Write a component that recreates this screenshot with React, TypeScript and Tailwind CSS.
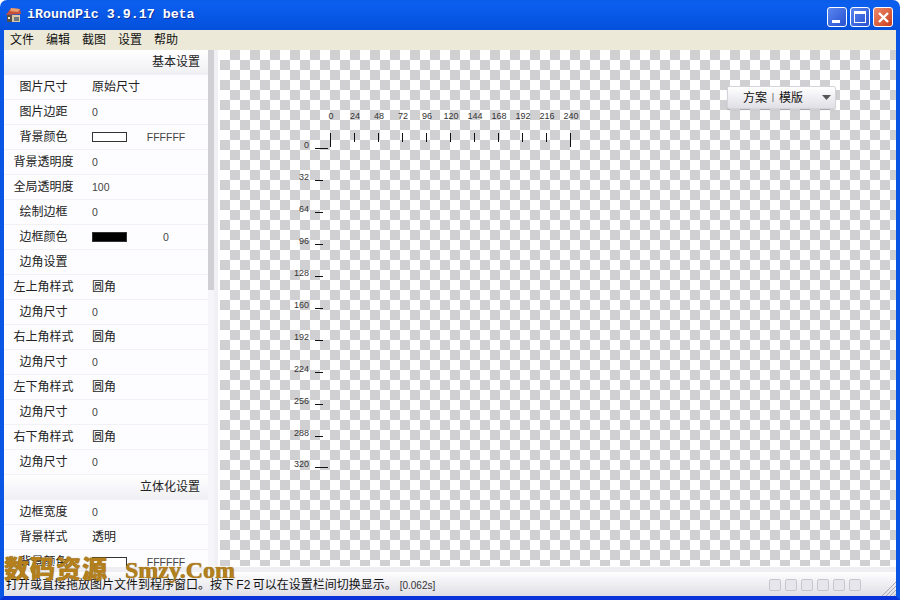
const xTicks = [0, 24, 48, 72, 96, 120, 144, 168, 192, 216, 240];
const yTicks = [0, 32, 64, 96, 128, 160, 192, 224, 256, 288, 320];

type Row = { label: string; value?: string; swatch?: string; extra?: string };

const basicRows: Row[] = [
  { label: "图片尺寸", value: "原始尺寸" },
  { label: "图片边距", value: "0" },
  { label: "背景颜色", swatch: "bg-white", extra: "FFFFFF" },
  { label: "背景透明度", value: "0" },
  { label: "全局透明度", value: "100" },
  { label: "绘制边框", value: "0" },
  { label: "边框颜色", swatch: "bg-black", extra: "0" },
  { label: "边角设置" },
  { label: "左上角样式", value: "圆角" },
  { label: "边角尺寸", value: "0" },
  { label: "右上角样式", value: "圆角" },
  { label: "边角尺寸", value: "0" },
  { label: "左下角样式", value: "圆角" },
  { label: "边角尺寸", value: "0" },
  { label: "右下角样式", value: "圆角" },
  { label: "边角尺寸", value: "0" },
];

const depthRows: Row[] = [
  { label: "边框宽度", value: "0" },
  { label: "背景样式", value: "透明" },
  { label: "背景颜色", swatch: "bg-white", extra: "FFFFFF" },
];

function SectionHeader({ title }: { title: string }) {
  return (
    <div className="h-[25px] shrink-0 flex items-center justify-end pr-[8px] text-[12px] text-[#222] bg-gradient-to-b from-white to-[#f0f0f4] border-b border-[#f0f0f4]">
      {title}
    </div>
  );
}

function PropRow({ row }: { row: Row }) {
  const isNumber = row.value !== undefined && /^\d+$/.test(row.value);
  return (
    <div className="h-[25px] shrink-0 flex items-center bg-[#fdfdff] border-b border-[#f1f1f6] text-[#222]">
      <div className="w-[79px] text-center text-[12px]">{row.label}</div>
      {row.value && (
        <div className={`pl-[9px] ${isNumber ? "pt-[2px] text-[10.5px] text-[#444]" : "text-[12px]"}`}>
          {row.value}
        </div>
      )}
      {row.swatch && (
        <>
          <div className={`ml-[9px] w-[35px] h-[10px] border border-[#333] ${row.swatch}`} />
          <div className="w-[78px] pt-[2px] text-center text-[10.5px] text-[#444]">{row.extra}</div>
        </>
      )}
    </div>
  );
}

function AppIcon() {
  return (
    <svg width="17" height="16" viewBox="0 0 17 16" className="shrink-0">
      <path d="M1 8 L6 1 L15 2 L16 7 Z" fill="#c8503a" />
      <path d="M6 1 L15 2 L13 5 L5 4 Z" fill="#e8a070" />
      <rect x="2" y="8" width="13" height="7" fill="#d9c9a8" />
      <rect x="2" y="8" width="5" height="7" fill="#57504a" />
      <rect x="9" y="10" width="5" height="4" fill="#6f7680" />
      <rect x="3" y="10" width="2" height="2" fill="#f2e6c8" />
    </svg>
  );
}

function WindowButtons() {
  return (
    <div className="flex gap-[3px] mr-[7px] mt-[4px]">
      <div className="w-[20px] h-[20px] rounded-[3px] border border-white bg-gradient-to-br from-[#5a86ef] to-[#2a4fd0] flex items-end pl-[4px] pb-[3px]">
        <div className="w-[8px] h-[3px] bg-white" />
      </div>
      <div className="w-[20px] h-[20px] rounded-[3px] border border-white bg-gradient-to-br from-[#5a86ef] to-[#2a4fd0] flex items-center justify-center">
        <div className="w-[12px] h-[12px] border border-white border-t-[3px]" />
      </div>
      <div className="w-[20px] h-[20px] rounded-[3px] border border-white bg-gradient-to-br from-[#ec8a6a] to-[#c83a16] flex items-center justify-center">
        <svg width="13" height="13" viewBox="0 0 13 13">
          <path d="M2 2 L11 11 M11 2 L2 11" stroke="white" strokeWidth="2.4" />
        </svg>
      </div>
    </div>
  );
}

// ruler drawn over the canvas, coordinates are relative to the canvas origin (220,50)
function Ruler() {
  return (
    <svg width="676" height="516" className="absolute left-0 top-0" fontFamily="Liberation Sans, sans-serif" fontSize="9" fill="#333">
      {xTicks.map((t, i) => {
        const x = 110.5 + i * 24;
        const long = i === 0 || i === xTicks.length - 1;
        return (
          <g key={t}>
            <text x={x + 0.5} y={69} textAnchor="middle">
              {t}
            </text>
            <line x1={x} x2={x} y1={83} y2={long ? 97 : 92} stroke="#111" />
          </g>
        );
      })}
      {yTicks.map((t, i) => {
        const y = 98.5 + (t === 320 ? 319 : t);
        const long = i === 0 || i === yTicks.length - 1;
        return (
          <g key={t}>
            <text x={89} y={y - 1} textAnchor="end">
              {t}
            </text>
            <line x1={95} x2={long ? 108 : 103} y1={y} y2={y} stroke="#111" />
          </g>
        );
      })}
    </svg>
  );
}

export default function App() {
  return (
    <div className="relative w-[900px] h-[600px] overflow-hidden flex flex-col bg-white font-['Liberation_Sans','Noto_Sans_CJK_SC',sans-serif]">
      {/* title bar */}
      <div className="h-[30px] shrink-0 rounded-t-[7px] flex items-center justify-between bg-gradient-to-b from-[#0a5be8] via-[#0b5fee] via-15% to-[#0450dc]">
        <div className="flex items-center gap-[5px] pl-[5px]">
          <AppIcon />
          <span className="font-['Liberation_Mono',monospace] font-bold text-[13.3px] text-white [text-shadow:1px_1px_0_#0a2f9c]">
            iRoundPic 3.9.17 beta
          </span>
        </div>
        <WindowButtons />
      </div>

      <div className="flex-1 min-h-0 flex flex-col border-x-4 border-[#0a55e4] border-b-4 border-b-[#0831d9]">
        {/* menu bar */}
        <div className="h-[20px] shrink-0 flex items-center gap-[12px] pl-[6px] bg-[#ece9d8] text-[12px] text-[#111]">
          <span>文件</span>
          <span>编辑</span>
          <span>截图</span>
          <span>设置</span>
          <span>帮助</span>
        </div>

        <div className="flex-1 min-h-0 flex">
          {/* property panel */}
          <div className="w-[204px] shrink-0 flex flex-col overflow-hidden bg-[#fdfdff]">
            <SectionHeader title="基本设置" />
            {basicRows.map((row, i) => (
              <PropRow key={i} row={row} />
            ))}
            <SectionHeader title="立体化设置" />
            {depthRows.map((row, i) => (
              <PropRow key={i} row={row} />
            ))}
          </div>
          <div className="w-[6px] shrink-0 bg-[#f6f6fa]">
            <div className="h-[240px] bg-[#d0d0d4]" />
          </div>
          <div className="w-[6px] shrink-0 bg-[#f0f0f5] border-r-2 border-white" />

          {/* canvas */}
          <div className="relative flex-1 min-w-0 bg-[repeating-conic-gradient(#d0d0d2_0_25%,#ffffff_0_50%)] bg-[length:20px_20px]">
            <Ruler />
            <div className="absolute left-[507px] top-[36px] w-[109px] h-[23px] flex items-center rounded-[2px] bg-gradient-to-b from-white to-[#dfdfe6] border border-[#d4d4da] shadow-[0_1px_1px_rgba(0,0,0,0.2)] text-[12px] text-[#111]">
              <span className="pl-[15px]">方案</span>
              <span className="w-[12px] text-center text-[9px] text-[#555]">|</span>
              <span>模版</span>
              <svg width="9" height="5" viewBox="0 0 9 5" className="ml-[19px]">
                <path d="M0 0 H9 L4.5 5 Z" fill="#555" />
              </svg>
            </div>
          </div>
        </div>

        {/* status bar */}
        <div className="h-[6px] shrink-0 bg-[#eeeef3] border-t border-white" />
        <div className="relative h-[24px] shrink-0 flex items-center justify-between pl-[2px] pt-[2px] bg-gradient-to-b from-white to-[#dedee6] text-[12px] text-[#111]">
          <div className="flex items-center gap-[3px]">
            <span className="[word-spacing:-1px]">打开或直接拖放图片文件到程序窗口。按下 F2 可以在设置栏间切换显示。</span>
            <span className="text-[10px] text-[#333]">[0.062s]</span>
          </div>
          <div className="flex items-center gap-[4px] mr-[35px]">
            {[0, 1, 2, 3, 4, 5].map((i) => (
              <div key={i} className="w-[12px] h-[12px] rounded-[2px] border border-[#c6c6ce] bg-[#e6e6ec]" />
            ))}
          </div>
          <svg width="15" height="15" viewBox="0 0 15 15" className="absolute right-0 bottom-0">
            <path d="M1 15 L15 1 M5 15 L15 5 M9 15 L15 9 M13 15 L15 13" stroke="#a8a8b2" />
          </svg>
        </div>
      </div>

      {/* watermark stamped on the screenshot */}
      <div className="absolute left-[4px] top-[550px] flex items-baseline text-[#b5801c] [text-shadow:0_0_1px_#6b4a08] pointer-events-none">
        <span className="font-['Noto_Sans_CJK_SC',sans-serif] font-black text-[25px] tracking-[1px] leading-[34px]">
          数码资源
        </span>
        <span className="ml-[17px] font-['Liberation_Serif',serif] font-bold text-[24px] leading-[34px]">
          Smzy.Com
        </span>
      </div>
    </div>
  );
}
